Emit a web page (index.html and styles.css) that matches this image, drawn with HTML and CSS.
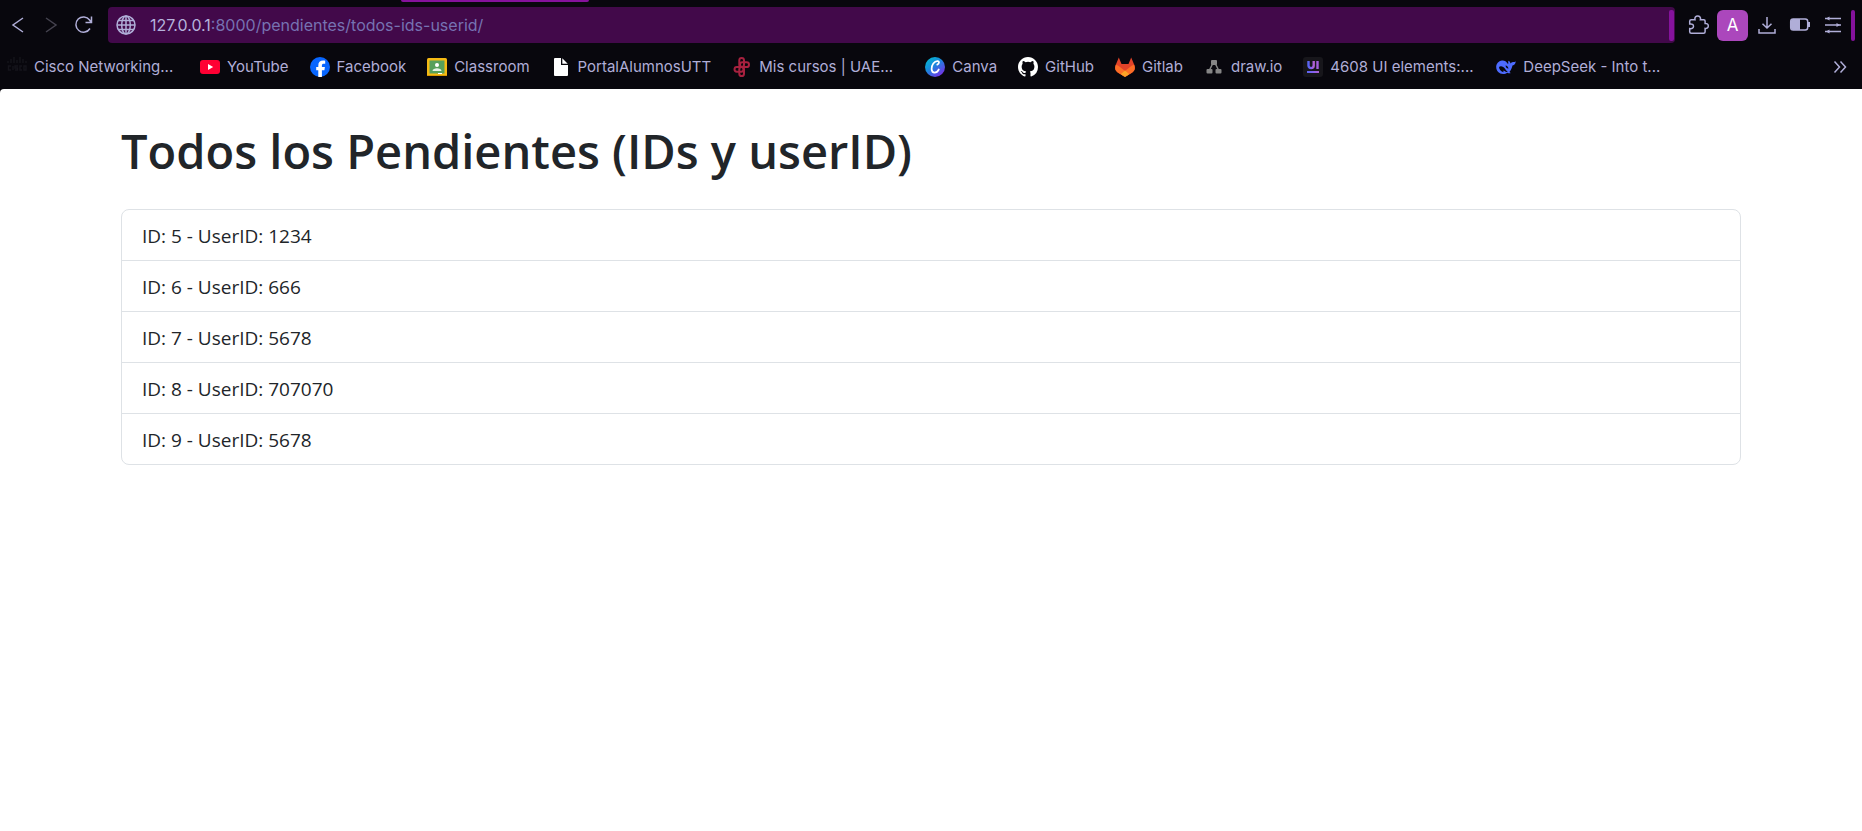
FILE: index.html
```html
<!DOCTYPE html>
<html lang="es">
<head>
<meta charset="utf-8">
<title>Todos los Pendientes (IDs y userID)</title>
<link rel="stylesheet" href="styles.css">
</head>
<body>
<header class="browser">
  <div class="tab-strip"></div>
  <div class="toolbar">
    <nav class="nav-buttons" aria-label="Navegación">
      <button class="tool" aria-label="Atrás"><svg width="20" height="20" viewBox="0 0 20 20"><path d="M15 3 5 10l10 7"/></svg></button>
      <button class="tool tool-off" aria-label="Adelante" disabled><svg width="20" height="20" viewBox="0 0 20 20"><path d="m5 3 10 7-10 7"/></svg></button>
      <button class="tool" aria-label="Recargar"><svg width="20" height="20" viewBox="0 0 20 20"><path d="M16 13.5A7.6 7.6 0 1 1 15.6 5L17 7M17.5 1.5v6h-6"/></svg></button>
    </nav>
    <div class="address">
      <svg class="globe" width="20" height="20" viewBox="0 0 20 20"><circle cx="10" cy="10" r="9"/><ellipse cx="10" cy="10" rx="4.3" ry="9"/><path d="M10 1v18M1 10h18M2.3 5.5h15.4M2.3 14.5h15.4"/></svg>
      <a class="url" href="#"><span class="host">127.0.0.1</span>:8000/pendientes/todos-ids-userid/</a>
      <span class="mark"></span>
    </div>
    <div class="actions">
      <button class="tool" aria-label="Extensiones"><svg width="22" height="22" viewBox="0 0 22 22"><path d="M3.200 5.800H7C6.400 3.400 7.800 2 9.700 2s3.300 1.400 2.700 3.800h3.400q1.300 0 1.300 1.300v2.400c2-.3 3.200.8 3.200 2.500s-1.200 2.700-3.200 2.400v3.400q0 1.500-1.500 1.500H3.300q-1.600 0-1.600-1.500v-3.200c2.600.4 3.800-.7 3.800-2.300S4.300 9.600 1.700 10V7.300q0-1.500 1.500-1.500z"/></svg></button>
      <button class="avatar" aria-label="Perfil">A</button>
      <button class="tool" aria-label="Descargas"><svg width="20" height="20" viewBox="0 0 20 20"><path d="M10 2v11M5.500 8.700 10 13l4.500-4.300M2 14v4h16v-4"/></svg></button>
      <button class="tool" aria-label="Batería"><svg width="22" height="20" viewBox="0 0 22 20"><rect x="1.700" y="4" width="17" height="11" rx="2.500"/><path class="fill" d="M4 4h7v11H4a2 2 0 0 1-2-2V6a2 2 0 0 1 2-2zM19 7h2v5h-2z"/></svg></button>
      <button class="tool" aria-label="Menú"><svg width="20" height="20" viewBox="0 0 20 20"><path d="M2 3.500h16M2 10h16M2 16.500h16"/><path class="fill" d="M6.500 1.500v4L3 3.500zM13.500 8v4L17 10zM6.500 14.500v4L3 16.500z"/></svg></button>
      <span class="mark"></span>
    </div>
  </div>
  <nav class="bookmarks" aria-label="Marcadores">
    <a class="bookmark clipped" href="#"><svg width="20" height="20" viewBox="0 0 20 20"><path d="M1 4v2M4 2v4M7 0v6M10 3v3M13 0v6M16 2v4M19 4v2M4 9H1.500v4H4M6 9v4M11 9H8v2h2.500v2H8M15 9h-2v4h2M17 9h2v4h-2z" fill="none" stroke="#15141b" stroke-width="1.400"/></svg><span>Cisco Networking...</span></a>
    <a class="bookmark" href="#"><svg width="20" height="20" viewBox="0 0 20 20"><rect y="3" width="20" height="14" rx="3" fill="#ff0033"/><path d="M8 7v6l5.200-3z" fill="#fff"/></svg><span>YouTube</span></a>
    <a class="bookmark" href="#"><svg width="20" height="20" viewBox="0 0 20 20"><circle cx="10" cy="10" r="10" fill="#0866ff"/><path d="M8.300 20v-6.800H6.200V10h2.100V8.700c0-3.500 1.600-5.100 5-5.100.7 0 1.500.1 1.900.2v2.900h-1.300c-1.500 0-2 .6-2 2V10h3l-.5 3.200h-2.500V20z" fill="#fff"/></svg><span>Facebook</span></a>
    <a class="bookmark" href="#"><svg width="20" height="20" viewBox="0 0 20 20"><rect y="1" width="20" height="18" rx="1.500" fill="#f5ba14"/><rect x="2.500" y="3.500" width="15" height="13" fill="#57a05b"/><circle cx="10" cy="8" r="2" fill="#fff"/><path d="M5.500 14c0-3.800 9-3.800 9 0z" fill="#e4f2e5"/><path d="M11 16h4v1h-4z" fill="#fff"/><path d="M0 18h20v1H0z" fill="#d99700"/></svg><span>Classroom</span></a>
    <a class="bookmark" href="#"><svg width="20" height="20" viewBox="0 0 20 20"><path d="M3 1h7v7h7v10q0 1-1 1H4q-1 0-1-1V2q0-1 1-1z" fill="#fff"/><path d="M11.300 1.300v5.400h5.400z" fill="#fff"/></svg><span>PortalAlumnosUTT</span></a>
    <a class="bookmark clipped" href="#"><svg width="20" height="20" viewBox="0 0 20 20"><g fill="none" stroke="#a7213f" stroke-width="2"><rect x="7.300" y="1" width="4.700" height="9" rx="2.350"/><rect x="7.300" y="10" width="4.700" height="9" rx="2.350"/><rect x="8" y="5.300" width="9" height="4.700" rx="2.350"/><rect x="2.500" y="10" width="9" height="4.700" rx="2.350"/></g></svg><span>Mis cursos | UAE...</span></a>
    <a class="bookmark" href="#"><svg width="20" height="20" viewBox="0 0 20 20"><defs><linearGradient id="canva" x1="0" y1="0" x2=".8" y2="1"><stop stop-color="#00c4cc"/><stop offset=".45" stop-color="#168bdc"/><stop offset="1" stop-color="#7d2ae8"/></linearGradient></defs><circle cx="10" cy="10" r="10" fill="url(#canva)"/><path d="M12.300 7.600c2-.8 2.400-3.300.3-3.500-3.200-.3-6.300 4.200-6 8 .4 4.900 5.200 4.300 7.200.4" fill="none" stroke="#fff" stroke-width="1.700" stroke-linecap="round"/></svg><span>Canva</span></a>
    <a class="bookmark" href="#"><svg width="20" height="20" viewBox="0 0 16 16"><path fill="#fff" d="M8 0C3.580 0 0 3.580 0 8c0 3.540 2.290 6.530 5.470 7.590.4.070.55-.17.55-.38 0-.19-.01-.82-.01-1.490-2.010.37-2.530-.49-2.690-.94-.09-.23-.48-.94-.82-1.130-.28-.15-.68-.52-.01-.53.63-.01 1.080.58 1.230.82.72 1.210 1.870.87 2.330.66.07-.52.28-.87.51-1.070-1.780-.2-3.640-.89-3.640-3.950 0-.87.31-1.590.82-2.150-.08-.2-.36-1.020.08-2.120 0 0 .67-.21 2.200.82a7.600 7.600 0 0 1 4 0c1.530-1.040 2.200-.82 2.200-.82.44 1.100.16 1.920.08 2.120.51.56.82 1.270.82 2.150 0 3.070-1.870 3.750-3.650 3.950.29.25.54.73.54 1.480 0 1.070-.01 1.930-.01 2.200 0 .21.15.46.55.38A8 8 0 0 0 16 8c0-4.420-3.580-8-8-8z"/></svg><span>GitHub</span></a>
    <a class="bookmark" href="#"><svg width="20" height="20" viewBox="0 0 20 20"><path d="M3.800.5 6.500 7h7L16.200.5l3 7.300c1.500 3.700.2 6-1.900 7.600L10 20l-7.300-4.600C.6 13.800-.7 11.500.8 7.800z" fill="#e24329"/><path d="m19.200 7.800.4 1.400c.8 3-.4 4.900-2.300 6.200L10 20l-3.500-3.200L15 10q2-1.700 4.200-2.200zM.8 7.800.4 9.200c-.8 3 .4 4.900 2.300 6.200L10 20l3.500-3.200L5 10Q3 8.300.8 7.800z" fill="#fc6d26"/><path d="m10 13.500 4.200 3.500L10 20l-4.200-3z" fill="#fca326"/></svg><span>Gitlab</span></a>
    <a class="bookmark" href="#"><svg width="20" height="20" viewBox="0 0 20 20"><path d="m9.500 5-4.500 9M10.500 5l4.500 9" stroke="#858585" stroke-width="1.500"/><g fill="#858585"><rect x="7" y="3" width="6" height="5" rx="1"/><rect x="2.500" y="12" width="6" height="4.500" rx="1"/><rect x="11.500" y="12" width="6" height="4.500" rx="1"/></g></svg><span>draw.io</span></a>
    <a class="bookmark clipped" href="#"><svg width="20" height="20" viewBox="0 0 20 20"><defs><linearGradient id="ui"><stop stop-color="#5865f2"/><stop offset=".6" stop-color="#8b62ee"/><stop offset="1" stop-color="#b35fd0"/></linearGradient></defs><rect width="20" height="20" rx="3" fill="#17161b"/><path d="M5.500 4v4.500a2.600 2.600 0 0 0 5.200 0V4" fill="none" stroke="url(#ui)" stroke-width="2.400"/><path d="M13.300 4h2.400v8h-2.400z" fill="#a45fdd"/><path d="M4 14h12v2H4z" fill="url(#ui)"/></svg><span>4608 UI elements:...</span></a>
    <a class="bookmark clipped" href="#"><svg width="20" height="20" viewBox="0 0 20 20"><path d="M19.700 4.300c-.9 1-1.800.7-2.700.8-1.100.1-1.900.9-2.500 1.300-.2-1.500-.9-2.200-2-2.700-.2.700-.7 1.600.1 2.500l-1 .5C10.300 4.300 8.300 3.200 6 3.500 2.400 4 .2 7 .2 10c0 4 3.100 7 6.900 7 1.700 0 3.100-.5 4.300-1.300 1 .7 2.700.8 3.300.4-.4-.4-.9-.7-1.300-1.100 2.100-2.400 2.500-4.700 3.100-6.400C18.700 8 19.700 6.300 19.700 4.300z" fill="#4d6bfe"/><path d="M3 10c1.700-1.300 4.500-.6 6.200 2 1 1.500 1.600 2.400 2.800 3-2 .3-3.200-.8-4.300-1.500-.7.500-.2 1.300-.1 1.700C5 14.400 3.100 12.700 3 10zM9.500 8.500c1.600.1 2.900 1.300 2.900 3.200-1.600-.3-2.600-1.400-2.900-3.200z" fill="#08070d"/></svg><span>DeepSeek - Into t...</span></a>
    <button class="more" aria-label="Más marcadores"><svg width="16" height="16" viewBox="0 0 16 16"><path d="m2.500 2.500 5 5.500-5 5.500M8.500 2.500l5 5.500-5 5.500"/></svg></button>
  </nav>
</header>
<main class="page">
  <h1 class="title">Todos los Pendientes (IDs y userID)</h1>
  <ul class="list">
    <li class="item">ID: 5 - UserID: 1234</li>
    <li class="item">ID: 6 - UserID: 666</li>
    <li class="item">ID: 7 - UserID: 5678</li>
    <li class="item">ID: 8 - UserID: 707070</li>
    <li class="item">ID: 9 - UserID: 5678</li>
  </ul>
</main>
</body>
</html>
```

FILE: styles.css
```css
* {
  box-sizing: border-box;
}

body {
  margin: 0;
  background: #08070d;
  font-family: "Open Sans", "Noto Sans", sans-serif;
}

button {
  border: 0;
  padding: 0;
  background: none;
  font: inherit;
  color: inherit;
}

svg {
  display: block;
  flex: none;
}

.browser {
  position: relative;
  background: #08070d;
  color: #b0aed8;
  font: 15px/20px Inter, sans-serif;
}

.tab-strip {
  position: absolute;
  top: 0;
  left: 401px;
  width: 188px;
  height: 2px;
  border-radius: 0 0 2px 2px;
  background: #85129c;
}

.toolbar {
  display: flex;
  align-items: center;
  padding: 7px 7px 0 8px;
}

.nav-buttons {
  display: flex;
  gap: 13px;
  margin-right: 14px;
}

.tool svg,
.globe,
.more svg {
  fill: none;
  stroke: currentColor;
  stroke-width: 1.5px;
}

.tool .fill {
  fill: currentColor;
  stroke: none;
}

.tool-off {
  color: #45434f;
}

.address {
  flex: 1;
  display: flex;
  align-items: center;
  height: 36px;
  padding: 0 1px 0 8px;
  border-radius: 4px;
  background: #42094a;
}

.url {
  flex: 1;
  margin-left: 14px;
  color: #7672b2;
  font-size: 16px;
  text-decoration: none;
}

.host {
  color: #b5b2dc;
}

.mark {
  width: 4px;
  height: 31px;
  border-radius: 2px;
  background: #85129c;
}

.address .mark {
  width: 5px;
}

.actions {
  display: flex;
  align-items: center;
  gap: 4px;
  margin-left: 9px;
}

.actions .tool {
  width: 29px;
  display: flex;
  justify-content: center;
}

.avatar {
  width: 31px;
  height: 31px;
  border-radius: 6px;
  background: #ab47bc;
  color: #fff;
  font-size: 17px;
}

.bookmarks {
  display: flex;
  align-items: center;
  gap: 21px;
  height: 46px;
  padding: 2px 14px 0 7px;
}

.bookmark {
  display: flex;
  align-items: center;
  gap: 7px;
  color: inherit;
  text-decoration: none;
  white-space: nowrap;
}

.clipped span {
  width: 145px;
}

.more {
  margin-left: auto;
}

.page {
  min-height: calc(100vh - 89px);
  padding: 32px max(15px, calc((100% - 1620px) / 2));
  border-top-left-radius: 4px;
  background: #fff;
  color: #212529;
}

.title {
  margin: 0 0 28px;
  font-size: 47px;
  line-height: 60px;
  font-weight: 600;
}

.list {
  margin: 0;
  padding: 0;
  list-style: none;
  border: 1px solid #dee2e6;
  border-radius: 8px;
}

.item {
  padding: 11px 20px 9px;
  font-size: 19px;
  line-height: 30px;
}

.item + .item {
  border-top: 1px solid #dee2e6;
}
```
